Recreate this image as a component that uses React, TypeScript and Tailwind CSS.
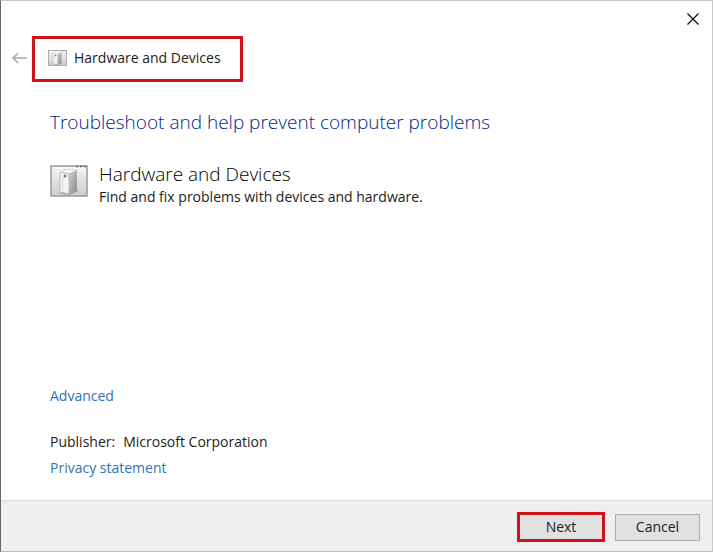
function DeviceIcon({ className }: { className: string }) {
  return (
    <svg className={className} viewBox="0 0 38 32" aria-hidden="true">
      <defs>
        <linearGradient id="pane" x1="0" y1="0" x2="0" y2="1">
          <stop offset="0" stopColor="#f4f4f4" />
          <stop offset="1" stopColor="#cdcdcd" />
        </linearGradient>
        <linearGradient id="side" x1="0" y1="0" x2="1" y2="1">
          <stop offset="0" stopColor="#cfcfcf" />
          <stop offset="1" stopColor="#8a8a8a" />
        </linearGradient>
      </defs>
      <rect x="1" y="1" width="36" height="30" fill="url(#pane)" stroke="#999" strokeWidth="1.500" />
      <path d="M2 3h34" stroke="#fafafa" strokeWidth="1.500" />
      <path d="M26 1.500h2M30 1.500h2M34 1.500h2" stroke="#666" strokeWidth="1.500" />
      <path d="M8 28l11 2 10-4-3-2z" fill="#777" opacity=".5" />
      <path d="M19 8.500l8-3.500V26l-8 4z" fill="url(#side)" />
      <path d="M10 7.500l7-3.500 10 1.500L19 8.500z" fill="#f7f7f7" stroke="#bbb" strokeWidth=".5" />
      <path d="M10 7.500l9 1.500v20l-9-2z" fill="#f4f4f4" stroke="#aaa" strokeWidth=".7" />
      <circle cx="15" cy="11" r="1.500" fill="#777" />
      <path d="M12.500 13v12" stroke="#d4d4d4" />
    </svg>
  );
}

export default function App() {
  return (
    <main className="flex min-h-screen flex-col border border-t-[#c8c8c8] border-r-[#c8c8c8] border-b-[#bdbdbd] border-l-[#666666] bg-white font-['Open_Sans','Noto_Sans',sans-serif] text-sm leading-5 text-[#1c1c1c]">
      <div className="flex h-[35px] justify-end pr-[11px]">
        <button type="button" aria-label="Close" className="flex w-4 items-center justify-center">
          <svg className="size-3" viewBox="0 0 12 12" fill="none" stroke="#111" strokeWidth="1.300" aria-hidden="true">
            <path d="M.5.5l11 11M11.500.5l-11 11" />
          </svg>
        </button>
      </div>
      <header className="flex items-center pl-[11px]">
        <button type="button" aria-label="Back" className="flex w-5 items-center">
          <svg className="h-3 w-4" viewBox="0 0 16 12" fill="none" stroke="#a6a6a6" strokeWidth="1.500" aria-hidden="true">
            <path d="M15 5H1M6 0L1 5l5 5" />
          </svg>
        </button>
        <div className="flex h-[46px] items-center gap-[7px] border-3 border-[#d01318] pr-[19px] pb-0.5 pl-[13px]">
          <DeviceIcon className="h-4 w-[19px]" />
          <span>Hardware and Devices</span>
        </div>
      </header>
      <section className="flex grow flex-col px-[49px] pt-[26px] pb-[22px]">
        <h1 className="text-[19px] leading-7 font-light text-[#001f8a]">Troubleshoot and help prevent computer problems</h1>
        <div className="flex gap-[11px] pt-[26px]">
          <DeviceIcon className="mt-[3px] h-8 w-[38px]" />
          <div>
            <h2 className="text-[19px] leading-6 font-light text-black">Hardware and Devices</h2>
            <p className="leading-[22px]">Find and fix problems with devices and hardware.</p>
          </div>
        </div>
        <div className="mt-auto flex flex-col items-start">
          <a href="#advanced" className="text-[#2d72b8]">Advanced</a>
          <p className="flex gap-2 pt-[26px] pb-1.5">
            <span>Publisher:</span>
            <span>Microsoft Corporation</span>
          </p>
          <a href="#privacy" className="text-[#2d72b8]">Privacy statement</a>
        </div>
      </section>
      <footer className="flex items-center justify-end gap-2.5 border-t border-[#dadada] bg-[#efefef] pt-[11px] pb-[9px] pr-3">
        <button type="button" className="h-[30px] w-[88px] border-3 border-[#d01318] bg-[#e1e1e1]">Next</button>
        <button type="button" className="h-[27px] w-[85px] border border-[#adadad] bg-[#e1e1e1]">Cancel</button>
      </footer>
    </main>
  );
}
